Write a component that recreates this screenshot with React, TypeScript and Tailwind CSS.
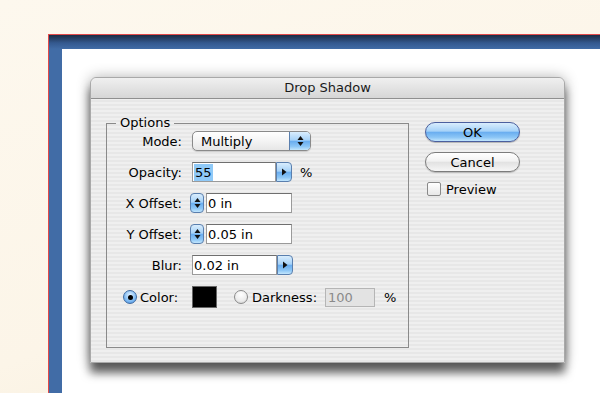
import React from "react";

const font = { fontFamily: '"DejaVu Sans", "Liberation Sans", sans-serif' };

function UpDown() {
  return (
    <svg width="7" height="12" viewBox="0 0 7 12">
      <path d="M3.5 1 L6.5 5 L0.5 5 Z" fill="#111" />
      <path d="M3.5 11 L6.5 7 L0.5 7 Z" fill="#111" />
    </svg>
  );
}

function RightArrow() {
  return (
    <svg width="6" height="8" viewBox="0 0 6 8">
      <path d="M1 0.5 L5.5 4 L1 7.5 Z" fill="#111" />
    </svg>
  );
}

const aqua =
  "bg-[linear-gradient(#d9edfd_0%,#a6d2f8_45%,#6aaef0_52%,#8cc6f6_80%,#c2e6fd_100%)]";

function Field({ w, children }: { w: string; children?: React.ReactNode }) {
  return (
    <div
      className={`${w} h-[20px] bg-white border border-[#9a9a9a] border-t-[#6f6f6f] flex items-center pl-[1px] text-[13px] leading-none`}
    >
      {children}
    </div>
  );
}

function ArrowBtn() {
  return (
    <div
      className={`w-[16px] h-[20px] ${aqua} border border-[#5a7fae] rounded-r-[4px] flex items-center justify-center`}
    >
      <RightArrow />
    </div>
  );
}

function Spinner() {
  return (
    <div
      className={`w-[14px] h-[20px] ${aqua} border border-[#5a7fae] rounded-[4px] flex items-center justify-center mr-[2px]`}
    >
      <UpDown />
    </div>
  );
}

function Label({ children }: { children: React.ReactNode }) {
  return <div className="w-[75px] text-right text-[13px] leading-none">{children}</div>;
}

export default function App() {
  return (
    <div
      className="w-[600px] h-[393px] overflow-hidden bg-[linear-gradient(160deg,#fdf8ee_0%,#fcf5e8_60%,#f5ecd9_100%)] pt-[34px] pl-[48px]"
      style={font}
    >
      <div className="h-full border-t border-l border-[#e24a4a] bg-[linear-gradient(#1c2c44_0px,#34598f_8px,#416ca6_14px,#416ca6_100%)] pt-[14px] pl-[13px]">
        <div className="h-full bg-white pt-[28px] pl-[28px]">
          <div className="w-[475px] h-[286px] rounded-t-[6px] border border-[#a9a9a9] shadow-[0_10px_10px_rgba(0,0,0,0.6),0_0_14px_rgba(0,0,0,0.3)] bg-[repeating-linear-gradient(180deg,#efefef_0px,#efefef_2px,#e7e7e7_2px,#e7e7e7_4px)] flex flex-col overflow-hidden">
            <div className="h-[21px] shrink-0 rounded-t-[6px] bg-[linear-gradient(#f0f0f0,#d6d6d6)] border-b border-[#8f8f8f] flex items-center justify-center text-[13px] text-[#1a1a1a]">
              Drop Shadow
            </div>
            <div className="flex">
              <fieldset className="ml-[15px] mt-[16px] w-[303px] h-[233px] border border-[#8a8a8a] p-0 m-0">
                <legend className="ml-[9px] px-[4px] text-[13px] leading-[16px]">Options</legend>
                <div className="flex flex-col gap-[11px]">
                  <div className="flex items-center h-[20px]">
                    <Label>Mode:</Label>
                    <div className="ml-[10px] w-[119px] h-[20px] rounded-[5px] border border-[#8a8a8a] bg-[linear-gradient(#ffffff,#f4f4f4_50%,#e6e6e6)] flex items-center overflow-hidden shadow-[0_1px_1px_rgba(0,0,0,0.15)]">
                      <div className="flex-1 pl-[8px] text-[13px] leading-none">Multiply</div>
                      <div className={`w-[21px] h-full ${aqua} border-l border-[#5a7fae] flex items-center justify-center`}>
                        <UpDown />
                      </div>
                    </div>
                  </div>
                  <div className="flex items-center h-[20px]">
                    <Label>Opacity:</Label>
                    <div className="ml-[10px] flex">
                      <Field w="w-[84px]">
                        <span className="bg-[#8fc9f7] px-[1px] py-[2px]">55</span>
                      </Field>
                      <ArrowBtn />
                    </div>
                    <div className="ml-[8px] text-[13px] leading-none">%</div>
                  </div>
                  <div className="flex items-center h-[20px]">
                    <Label>X Offset:</Label>
                    <div className="ml-[8px] flex">
                      <Spinner />
                      <Field w="w-[86px]">0 in</Field>
                    </div>
                  </div>
                  <div className="flex items-center h-[20px]">
                    <Label>Y Offset:</Label>
                    <div className="ml-[8px] flex">
                      <Spinner />
                      <Field w="w-[86px]">0.05 in</Field>
                    </div>
                  </div>
                  <div className="flex items-center h-[20px]">
                    <Label>Blur:</Label>
                    <div className="ml-[10px] flex">
                      <Field w="w-[85px]">0.02 in</Field>
                      <ArrowBtn />
                    </div>
                  </div>
                  <div className="flex items-center h-[22px]">
                    <div className="w-[75px] flex items-center pl-[16px]">
                      <div className="w-[14px] h-[14px] rounded-full border border-[#3f6aa0] bg-[radial-gradient(circle_at_50%_35%,#e3f2fe,#7fbaf2_60%,#3d87dc)] flex items-center justify-center">
                        <div className="w-[5px] h-[5px] rounded-full bg-black" />
                      </div>
                      <span className="ml-[3px] text-[13px] leading-none">Color:</span>
                    </div>
                    <div className="ml-[10px] w-[25px] h-[22px] bg-black border border-[#666]" />
                    <div className="ml-[17px] w-[14px] h-[14px] rounded-full border border-[#8a8a8a] bg-[radial-gradient(circle_at_50%_30%,#ffffff,#ececec_60%,#c9c9c9)]" />
                    <span className="ml-[4px] text-[13px] leading-none">Darkness:</span>
                    <div className="ml-[8px] w-[50px] h-[19px] bg-[#e3e3e3] border border-[#b5b5b5] flex items-center pl-[2px] text-[13px] leading-none text-[#8a8a8a]">
                      100
                    </div>
                    <span className="ml-[9px] text-[13px] leading-none">%</span>
                  </div>
                </div>
              </fieldset>
              <div className="ml-[16px] mt-[23px] flex flex-col">
                <div
                  className={`w-[95px] h-[20px] rounded-full border border-[#4b5f9e] ${aqua} flex items-center justify-center text-[13px] leading-none shadow-[0_1px_1px_rgba(0,0,0,0.25)]`}
                >
                  OK
                </div>
                <div className="mt-[10px] w-[95px] h-[20px] rounded-full border border-[#7c7c7c] bg-[linear-gradient(#ffffff,#f2f2f2_45%,#e2e2e2_52%,#f6f6f6)] flex items-center justify-center text-[13px] leading-none shadow-[0_1px_1px_rgba(0,0,0,0.2)]">
                  Cancel
                </div>
                <div className="mt-[10px] ml-[2px] flex items-center">
                  <div className="w-[14px] h-[14px] rounded-[2px] border border-[#8a8a8a] bg-[linear-gradient(#ffffff,#e8e8e8)]" />
                  <span className="ml-[5px] text-[13px] leading-none">Preview</span>
                </div>
              </div>
            </div>
          </div>
        </div>
      </div>
    </div>
  );
}
